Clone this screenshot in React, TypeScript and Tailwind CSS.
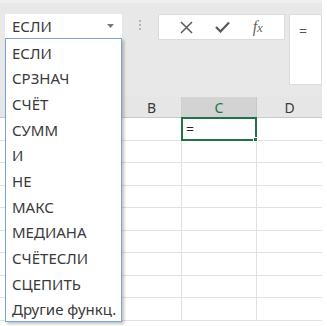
import React from 'react'

const items = ['ЕСЛИ', 'СРЗНАЧ', 'СЧЁТ', 'СУММ', 'И', 'НЕ', 'МАКС', 'МЕДИАНА', 'СЧЁТЕСЛИ', 'СЦЕПИТЬ', 'Другие функц.']

const font = { fontFamily: '"Noto Sans", "Open Sans", sans-serif' }

export default function App() {
  const rows = Array.from({ length: 9 })

  return (
    <div className="relative w-[327px] h-[326px] bg-white overflow-hidden" style={font}>
      <div className="w-[322px] h-full flex flex-col bg-white">
        {/* toolbar / formula bar */}
        <div className="h-[97px] bg-[#e8e8e8] flex items-start pt-[14px] border-t-[3px] border-[#efefef]">
          <div className="ml-[5px] w-[117px] h-[24px] bg-white flex items-center justify-between pl-[7px] pr-[8px] mt-[-3px]">
            <span className="text-[15px] text-[#3a3a3a]">ЕСЛИ</span>
            <svg width="7" height="4" viewBox="0 0 7 4">
              <path d="M0 0 L7 0 L3.5 4 Z" fill="#777" />
            </svg>
          </div>
          <div className="w-[36px] flex flex-col items-center gap-[2px] pt-[6px] mt-[-3px]">
            <div className="w-[2px] h-[2px] bg-[#b5b5b5]" />
            <div className="w-[2px] h-[2px] bg-[#b5b5b5]" />
            <div className="w-[2px] h-[2px] bg-[#b5b5b5]" />
          </div>
          <div className="w-[127px] h-[26px] bg-white border border-[#dcdcdc] flex items-center justify-around px-[10px] mt-[-3px]">
            <svg width="13" height="13" viewBox="0 0 13 13">
              <path d="M1 1 L12 12 M12 1 L1 12" stroke="#5a5a5a" strokeWidth="1.5" />
            </svg>
            <svg width="15" height="12" viewBox="0 0 15 12">
              <path d="M1 6 L5.5 10.5 L14 1.5" stroke="#5a5a5a" strokeWidth="2.2" fill="none" />
            </svg>
            <span className="text-[16px] text-[#666] italic leading-none" style={{ fontFamily: '"Liberation Serif", serif' }}>
              f<span className="text-[13px]">x</span>
            </span>
          </div>
          <div className="ml-[4px] w-[33px] h-[71px] bg-white border border-[#dcdcdc] pl-[9px] pt-[3px] mt-[-3px]">
            <span className="text-[14px] text-[#555]">=</span>
          </div>
        </div>

        {/* column headers */}
        <div className="h-[21px] flex bg-[#e6e6e6] border-b border-[#c8c8c8]">
          <div className="w-[122px]" />
          <div className="w-[60px] flex items-center justify-center text-[14px] text-[#3a3a3a] border-r border-[#d0d0d0]">B</div>
          <div className="w-[75px] flex items-center justify-center text-[14px] text-[#217346] bg-[#d3d3d3] border-r border-[#c8c8c8]">C</div>
          <div className="w-[65px] flex items-center justify-center text-[14px] text-[#3a3a3a]">D</div>
        </div>

        {/* grid */}
        <div className="flex-1">
          {rows.map((_, i) => (
            <div key={i} className="h-[22.5px] flex border-b border-[#e1e1e1]">
              <div className="w-[122px]" />
              <div className="w-[60px] border-r border-[#e1e1e1]" />
              <div className="w-[75px] border-r border-[#e1e1e1] relative">
                {i === 0 && (
                  <div className="absolute inset-[-1px] border-2 border-[#217346] flex items-center pl-[3px]">
                    <span className="text-[14px] text-[#222] leading-none">=</span>
                    <div className="absolute right-[-3px] bottom-[-3px] w-[5px] h-[5px] bg-[#217346] border border-white" />
                  </div>
                )}
              </div>
              <div className="w-[65px]" />
            </div>
          ))}
        </div>
      </div>

      {/* function dropdown */}
      <div className="absolute left-[5px] top-[38px] w-[117px] h-[284px] bg-white border border-[#7aa6d6] shadow-[2px_2px_3px_rgba(0,0,0,0.25)] pt-[1px]">
        {items.map((t) => (
          <div key={t} className="h-[25.7px] flex items-center pl-[6px] text-[15px] text-[#3a3a3a] whitespace-nowrap">
            {t}
          </div>
        ))}
      </div>
    </div>
  )
}
